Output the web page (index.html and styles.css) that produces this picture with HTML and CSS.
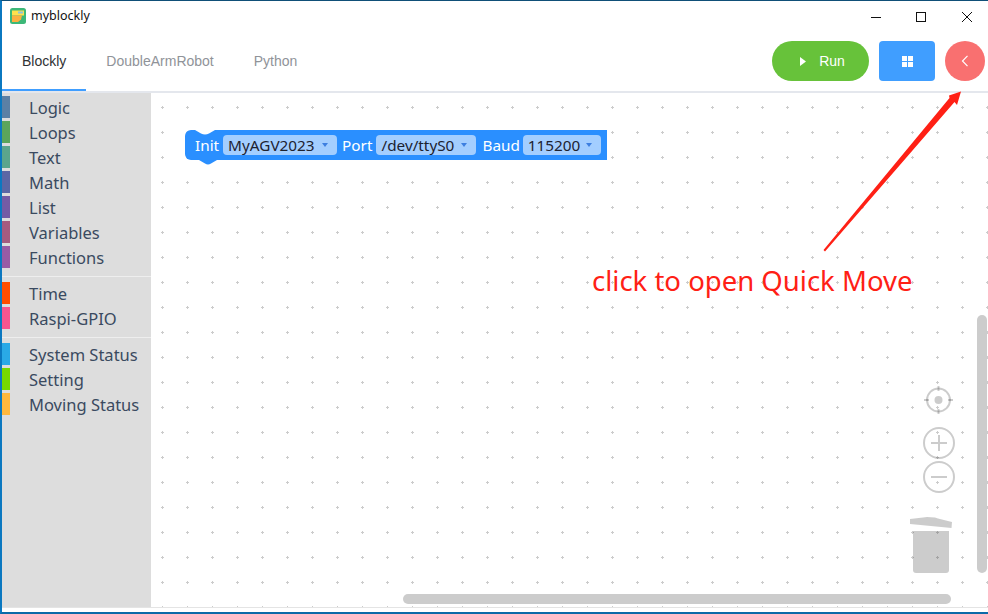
FILE: index.html
```html
<!DOCTYPE html>
<html lang="en">
<head>
    <meta charset="UTF-8">
    <link rel="stylesheet" href="styles.css">
    <title>myblockly</title>
</head>
<body>
    <div class="window">
        <div class="titlebar">
            <svg class="appIcon" width="16" height="16" viewBox="0 0 16 16">
                <rect width="16" height="16" rx="2.5" fill="#3cb878"/>
                <rect x="2" y="2.5" width="12" height="5" fill="#ffe14d"/>
                <rect x="8" y="3.5" width="5" height="2" fill="#8cc4dc"/>
                <path d="M2 7.5h10l-1 4-3 2.5H2z" fill="#fbb040"/>
            </svg>
            <span class="appName">myblockly</span>
            <div class="winButtons">
                <svg width="10" height="10" viewBox="0 0 10 10"><path d="M0 5.5h10" stroke="#111" fill="none"/></svg>
                <svg width="10" height="10" viewBox="0 0 10 10"><rect x=".5" y=".5" width="9" height="9" stroke="#111" fill="none"/></svg>
                <svg width="10" height="10" viewBox="0 0 10 10"><path d="M0 0l10 10M10 0L0 10" stroke="#111" fill="none"/></svg>
            </div>
        </div>

        <div class="header">
            <div class="tabs">
                <div class="tab active">Blockly</div>
                <div class="tab">DoubleArmRobot</div>
                <div class="tab">Python</div>
            </div>
            <div class="actions">
                <button class="btnRun">
                    <svg width="6" height="9" viewBox="0 0 6 9"><path d="M0 0l6 4.5L0 9z" fill="#fff"/></svg>
                    Run
                </button>
                <button class="btnGrid">
                    <svg width="11" height="11" viewBox="0 0 11 11" fill="#fff">
                        <rect width="5" height="5"/><rect x="6" width="5" height="5"/>
                        <rect y="6" width="5" height="5"/><rect x="6" y="6" width="5" height="5"/>
                    </svg>
                </button>
                <button class="btnBack">
                    <svg width="8" height="12" viewBox="0 0 8 12"><path d="M6.5 .8L1.5 6l5 5.2" stroke="#fff" stroke-width="1.2" fill="none"/></svg>
                </button>
            </div>
        </div>

        <div class="main">
            <div class="toolbox">
                <div class="cat"><i style="background:#5b80a5"></i>Logic</div>
                <div class="cat"><i style="background:#5ba55b"></i>Loops</div>
                <div class="cat"><i style="background:#5ba58c"></i>Text</div>
                <div class="cat"><i style="background:#5b67a5"></i>Math</div>
                <div class="cat"><i style="background:#745ba5"></i>List</div>
                <div class="cat"><i style="background:#a55b80"></i>Variables</div>
                <div class="cat"><i style="background:#995ba5"></i>Functions</div>
                <div class="sep"></div>
                <div class="cat"><i style="background:#ff4d00"></i>Time</div>
                <div class="cat"><i style="background:#f7558f"></i>Raspi-GPIO</div>
                <div class="sep"></div>
                <div class="cat"><i style="background:#2aa9e6"></i>System Status</div>
                <div class="cat"><i style="background:#77d900"></i>Setting</div>
                <div class="cat"><i style="background:#ffb83d"></i>Moving Status</div>
            </div>

            <div class="workspace">
                <svg class="grid" width="100%" height="100%">
                    <defs>
                        <pattern id="dots" x="10" y="13" width="25" height="25" patternUnits="userSpaceOnUse">
                            <path d="M0 1h3v1H0zM1 0h1v3H1z" fill="#ccc"/>
                        </pattern>
                    </defs>
                    <rect width="100%" height="100%" fill="url(#dots)"/>
                </svg>

                <div class="block">
                    <svg class="notch" width="20" height="5" viewBox="0 0 20 5"><path d="M0 0h20l-6 3.5q-4 2-8 0z" fill="#fff"/></svg>
                    <svg class="bump" width="18" height="5" viewBox="0 0 18 5"><path d="M0 0h18l-6 3.5q-3 2-6 0z" fill="#2a8fff"/></svg>
                    <span class="blockLabel">Init</span>
                    <span class="field f1">MyAGV2023<b></b></span>
                    <span class="blockLabel">Port</span>
                    <span class="field f2">/dev/ttyS0<b></b></span>
                    <span class="blockLabel">Baud</span>
                    <span class="field f3">115200<b></b></span>
                </div>

                <svg class="controls" width="44" height="192" viewBox="0 0 44 192">
                    <g fill="none" stroke="#000" stroke-opacity=".2" stroke-width="2">
                        <circle cx="21.5" cy="14" r="11.500"/>
                        <path d="M21.5 0v5M21.5 23v5M7 14h5M31 14h5"/>
                        <circle cx="22" cy="57" r="15"/>
                        <path d="M22 49v16M14 57h16"/>
                        <circle cx="22" cy="91" r="15"/>
                        <path d="M14 91h16"/>
                    </g>
                    <circle cx="21.5" cy="14" r="4" fill="#000" fill-opacity=".2"/>
                    <path d="M-7 133L6 131.500 10 131 18 131.500 21 132.500 35 136 34.500 142 -7 138z" fill="#000" fill-opacity=".2"/>
                    <path d="M-4 145h36v39q0 3-3 3H-1q-3 0-3-3z" fill="#000" fill-opacity=".2"/>
                </svg>

                <div class="scrollV"></div>
                <div class="scrollH"></div>
            </div>
        </div>

        <div class="note">click to open Quick Move</div>
        <svg class="arrow" width="988" height="614" viewBox="0 0 988 614">
            <path d="M823.500 250L949.500 98 949 95.500 961 91.500 957 105 954.500 102 825 251.500z" fill="#ff2015"/>
        </svg>
    </div>
</body>
</html>
```

FILE: styles.css
```css
html, body {
    margin: 0;
    height: 100%;
    overflow: hidden;
    background-color: white;
}
.window {
    position: relative;
    box-sizing: border-box;
    width: 988px;
    height: 614px;
    border-top: 1px solid #0f4f78;
    border-left: 2px solid #0b78c0;
    border-bottom: 2px solid #0b6aa8;
    padding-bottom: 4px;
    display: flex;
    flex-direction: column;
}

/* title bar */
.titlebar {
    height: 33px;
    display: flex;
    align-items: center;
    flex-shrink: 0;
    padding-bottom: 4px;
    box-sizing: border-box;
}
.appIcon {
    margin-left: 8px;
}
.appName {
    margin-left: 5px;
    font-family: "Noto Sans", sans-serif;
    font-size: 12.500px;
    color: #111;
}
.winButtons {
    margin-left: auto;
    margin-right: 16px;
    display: flex;
    gap: 35px;
    padding-top: 3px;
}
.winButtons svg {
    display: block;
}
.winButtons svg:nth-child(2) {
    margin-right: 1px;
}

/* tabs + buttons */
.header {
    height: 59px;
    flex-shrink: 0;
    box-sizing: border-box;
    border-bottom: 2px solid #e4e7ed;
    display: flex;
    justify-content: space-between;
}
.tabs {
    display: flex;
}
.tab {
    padding: 0 20px;
    height: 57px;
    line-height: 54px;
    box-sizing: border-box;
    font-family: "Liberation Sans", sans-serif;
    font-size: 14px;
    color: #909399;
}
.tab.active {
    color: #303133;
    border-bottom: 2px solid #409eff;
}
.actions {
    display: flex;
    gap: 10px;
    padding-top: 7px;
    margin-right: 3px;
}
button {
    height: 40px;
    border: none;
    padding: 0;
    color: white;
    font-family: "Liberation Sans", sans-serif;
    font-size: 14px;
    display: flex;
    align-items: center;
    justify-content: center;
}
.btnRun {
    width: 97px;
    padding-left: 4px;
    border-radius: 20px;
    background-color: #67c23a;
    gap: 13px;
}
.btnGrid {
    width: 56px;
    border-radius: 4px;
    background-color: #409eff;
}
.btnBack {
    width: 40px;
    border-radius: 50%;
    background-color: #f97070;
}

/* main area */
.main {
    flex: 1;
    display: flex;
    min-height: 0;
    border-bottom: 1px solid #e4e4e4;
}
.toolbox {
    width: 149px;
    flex-shrink: 0;
    box-sizing: border-box;
    padding-top: 3px;
    background-color: #ddd;
}
.cat {
    height: 25px;
    display: flex;
    font-family: "Noto Sans", sans-serif;
    font-size: 16.500px;
    line-height: 24px;
    color: #3a4a60;
    white-space: nowrap;
}
.cat i {
    width: 8px;
    height: 22px;
    margin-right: 19px;
}
.sep {
    height: 1px;
    margin: 5px 0;
    background-color: #eee;
}

/* blockly canvas */
.workspace {
    position: relative;
    flex: 1;
    overflow: hidden;
}
.grid {
    position: absolute;
    left: 0;
    top: 0;
}
.block {
    position: absolute;
    left: 34px;
    top: 37px;
    width: 422px;
    height: 30px;
    box-sizing: border-box;
    padding-left: 10px;
    border-radius: 6px 0 0 6px;
    background-color: #2a8fff;
    display: flex;
    align-items: center;
    font-family: "Noto Sans", sans-serif;
    font-size: 15.300px;
    white-space: nowrap;
}
.notch {
    position: absolute;
    left: 10px;
    top: 0;
}
.bump {
    position: absolute;
    left: 14px;
    top: 30px;
}
.blockLabel {
    color: white;
}
.field {
    box-sizing: border-box;
    height: 20px;
    line-height: 20px;
    padding: 0 9px 0 5px;
    border-radius: 4px;
    background-color: #a3ceff;
    color: #1c2230;
    display: flex;
    justify-content: space-between;
    align-items: center;
}
.field b {
    width: 0;
    height: 0;
    border-left: 3px solid transparent;
    border-right: 3px solid transparent;
    border-top: 4px solid #3d7fe0;
}
.f1 {
    width: 114px;
    margin: 0 5px 0 4px;
}
.f2 {
    width: 100px;
    margin: 0 6px 0 4px;
}
.f3 {
    width: 78px;
    margin-left: 3px;
}
.controls {
    position: absolute;
    left: 766px;
    top: 293px;
    overflow: visible;
}
.scrollV {
    position: absolute;
    left: 826px;
    top: 222px;
    width: 10px;
    height: 258px;
    border-radius: 5px;
    background-color: #ccc;
}
.scrollH {
    position: absolute;
    left: 252px;
    top: 501px;
    width: 548px;
    height: 10px;
    border-radius: 5px;
    background-color: #ccc;
}

/* red note painted over the screenshot */
.note {
    position: absolute;
    left: 590px;
    top: 261px;
    font-family: "Noto Sans", sans-serif;
    font-size: 27.500px;
    color: #ff2015;
    white-space: nowrap;
}
.arrow {
    position: absolute;
    left: -2px;
    top: -1px;
    pointer-events: none;
}
```
